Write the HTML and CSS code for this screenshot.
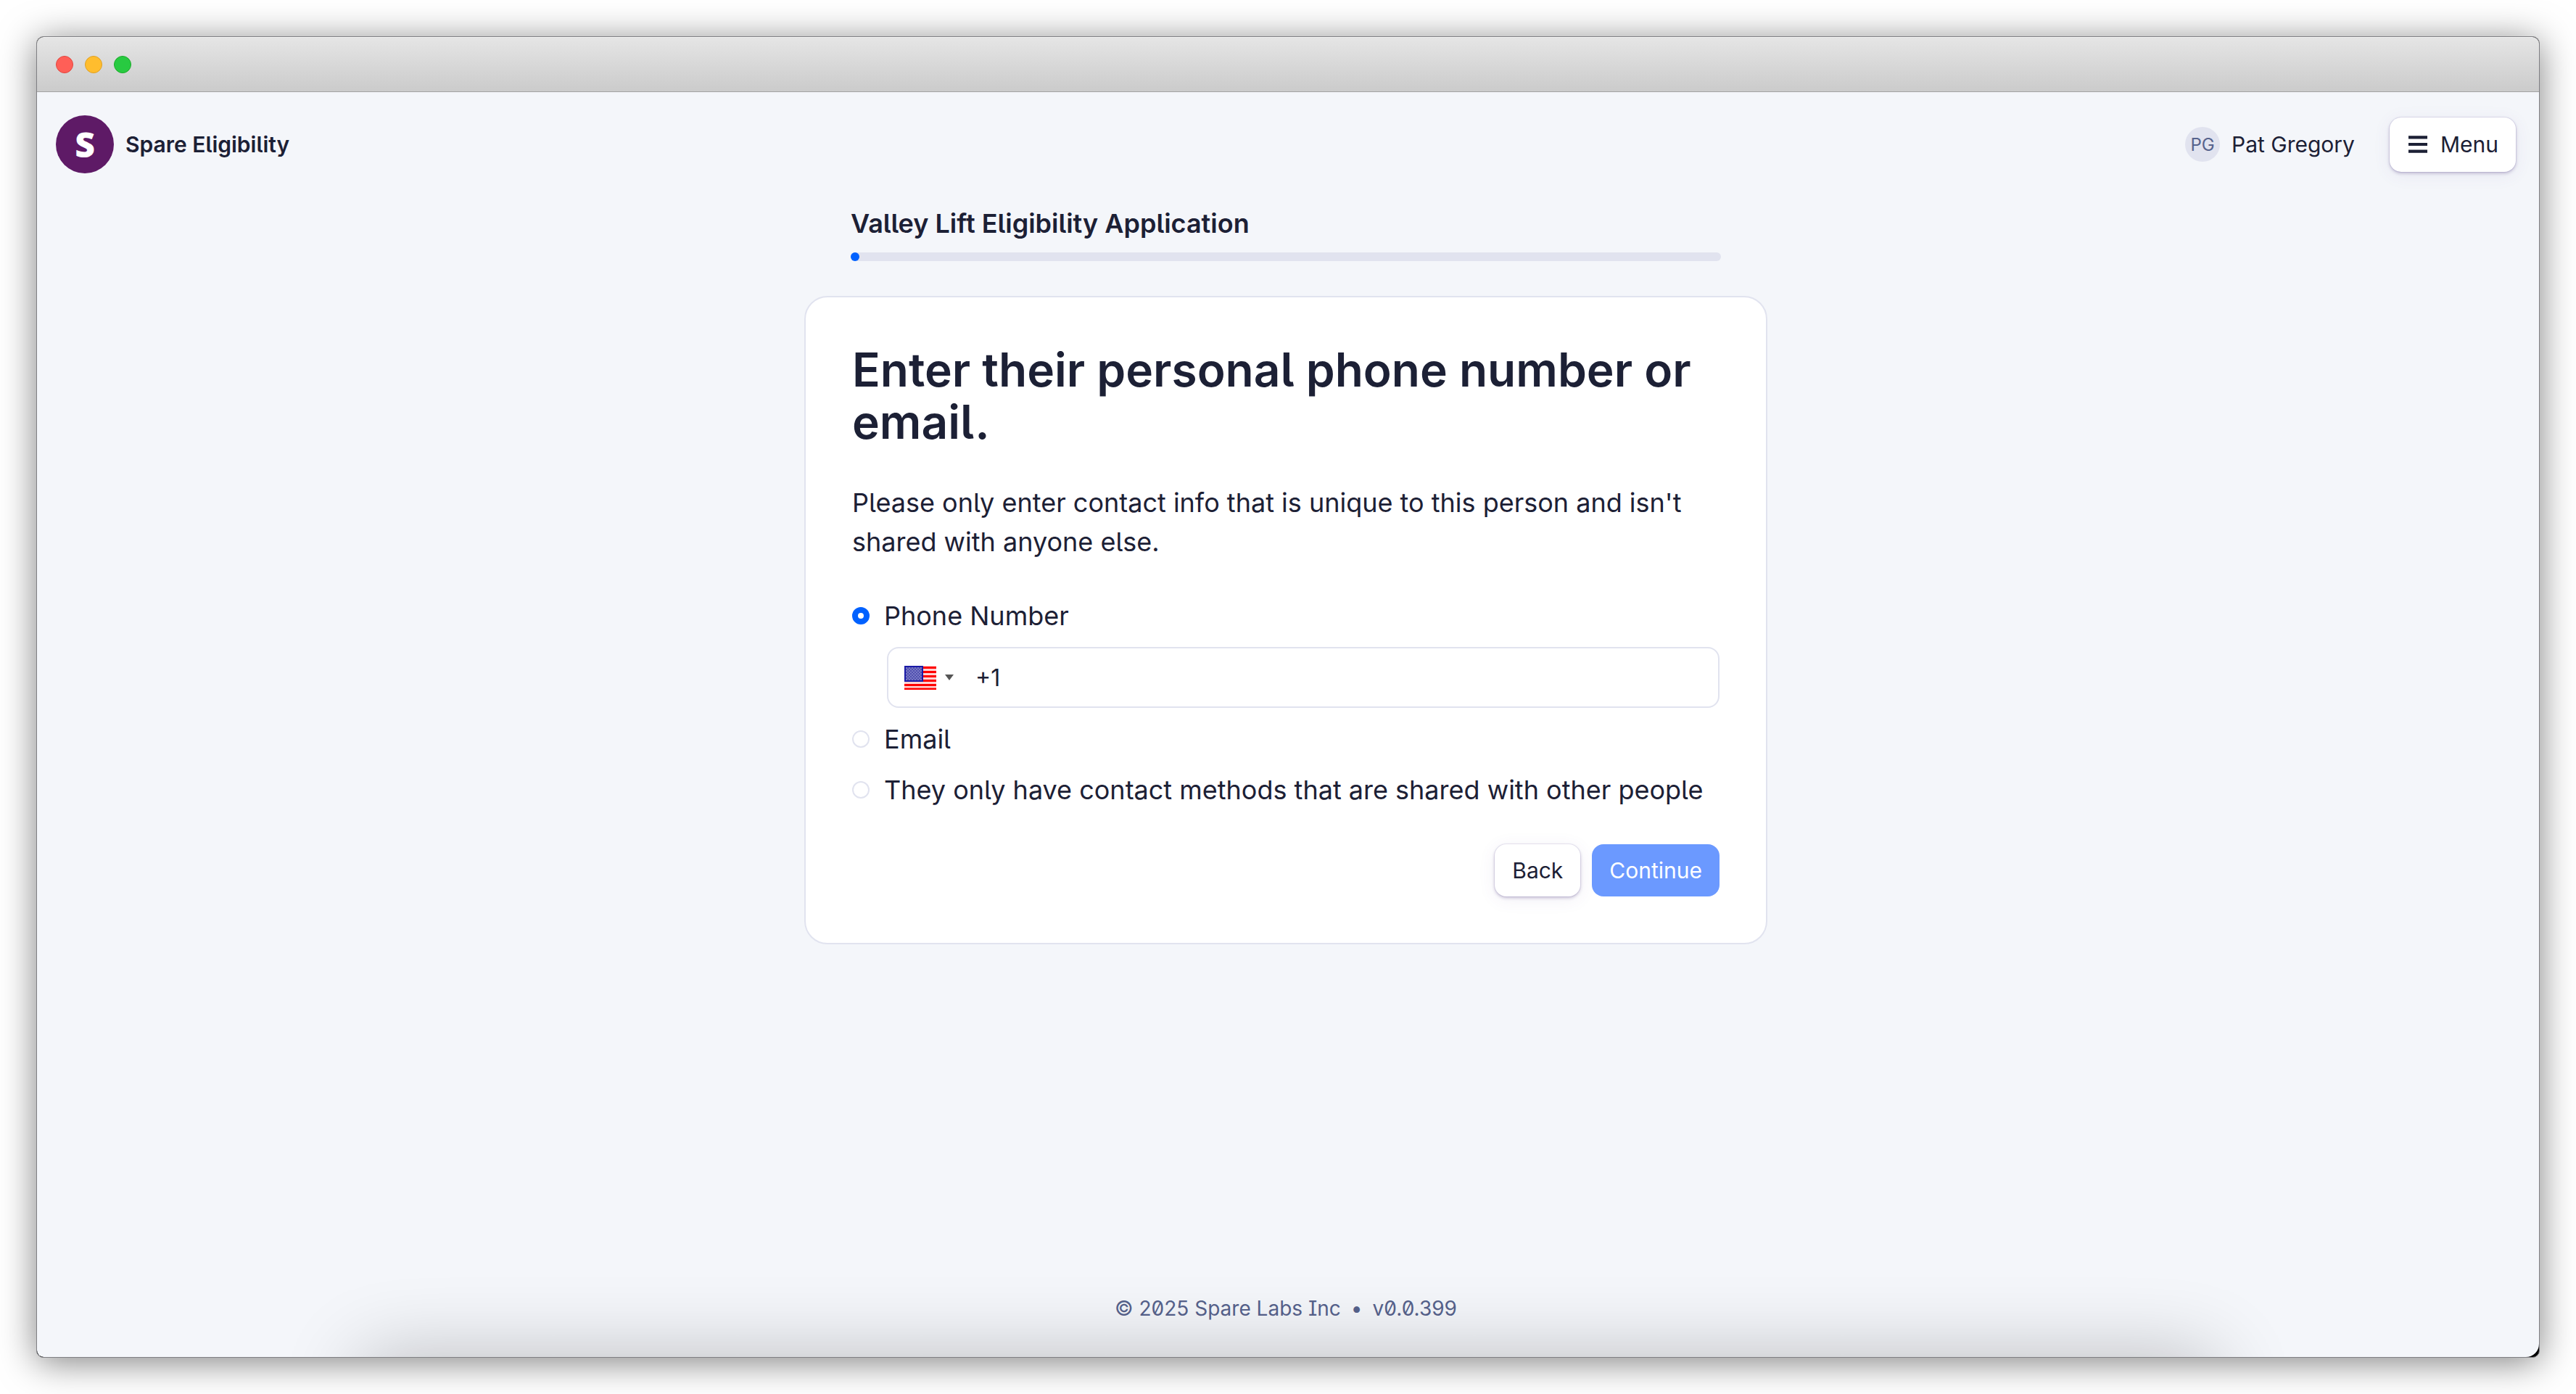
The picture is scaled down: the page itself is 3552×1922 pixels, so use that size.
FILE: index.html
```html
<!DOCTYPE html>
<html lang="en">
<head>
<meta charset="utf-8">
<meta name="viewport" content="width=device-width, initial-scale=1">
<title>Spare Eligibility</title>
<link rel="stylesheet" href="styles.css">
</head>
<body>
<div class="window">
  <div class="titlebar">
    <span class="light light-close"></span>
    <span class="light light-minimize"></span>
    <span class="light light-zoom"></span>
  </div>
  <div class="app">
    <header class="header">
      <a class="brand" href="#"><span class="logo">S</span><span>Spare Eligibility</span></a>
      <div class="account">
        <div class="user"><span class="avatar">PG</span><span>Pat Gregory</span></div>
        <button class="button button-menu" type="button">
          <svg class="menu-icon" viewBox="0 0 26 24" aria-hidden="true"><path d="M0 2.3h26M0 12h26M0 21.7h26" stroke="currentColor" stroke-width="4.2"/></svg>
          Menu
        </button>
      </div>
    </header>

    <main class="main">
      <div class="progress-block">
        <h2 class="form-name" id="form-name">Valley Lift Eligibility Application</h2>
        <div class="progress" role="progressbar" aria-labelledby="form-name" aria-valuenow="1" aria-valuemin="0" aria-valuemax="100"><div class="progress-fill" style="width: 1%"></div></div>
      </div>

      <form class="card">
        <h1 class="question">Enter their personal phone number or email.</h1>
        <p class="hint">Please only enter contact info that is unique to this person and isn't shared with anyone else.</p>
        <div class="options">
          <label class="option"><input class="radio" type="radio" name="contact" checked>Phone Number</label>
          <div class="phone-field">
            <button class="country" type="button" aria-label="Country: United States">
              <svg class="flag" viewBox="0 0 44 33" aria-hidden="true">
                <defs>
                  <pattern id="stars" width="4" height="4" patternUnits="userSpaceOnUse">
                    <rect width="4" height="4" fill="#5050b0"/>
                    <rect width="2" height="2" fill="#7878c4"/><rect x="2" y="2" width="2" height="2" fill="#7878c4"/>
                  </pattern>
                </defs>
                <rect width="44" height="33" fill="#ffd2d2"/>
                <path d="M0 2.5h44M0 8.5h44M0 14.5h44M0 20.5h44M0 26.5h44M0 32h44" stroke="#ff0000" stroke-width="3"/>
                <rect width="26" height="22" fill="#1a1aa6"/>
                <rect x="2" y="2" width="22" height="18" fill="url(#stars)"/>
              </svg>
              <svg class="caret" viewBox="0 0 12 8" aria-hidden="true"><path d="M0 0h12L6 8z" fill="#555"/></svg>
            </button>
            <input class="phone-input" type="tel" aria-label="Phone Number" value="+1">
          </div>
          <label class="option"><input class="radio" type="radio" name="contact">Email</label>
          <label class="option"><input class="radio" type="radio" name="contact">They only have contact methods that are shared with other people</label>
        </div>
        <div class="actions">
          <button class="button" type="button">Back</button>
          <button class="button button-primary" type="submit">Continue</button>
        </div>
      </form>
    </main>

    <footer class="footer"><span>© 2025 Spare Labs Inc</span><span>•</span><span>v0.0.399</span></footer>
  </div>
</div>
</body>
</html>
```
FILE: styles.css
```css
:root {
  --ink: #1c2035;
  --muted: #56628c;
  --line: #e1e3ef;
  --surface: #f4f6fa;
  --blue: #0061ff;
}

* {
  box-sizing: border-box;
}

body {
  margin: 0;
  min-height: 100vh;
  padding: 50px;
  display: flex;
  background: #fff;
  color: var(--ink);
  font-family: Inter, "Liberation Sans", sans-serif;
  font-size: 30px;
  font-feature-settings: "ss02";
}

h1, h2, p {
  margin: 0;
}

button, input {
  margin: 0;
  color: inherit;
  font: inherit;
}

.window {
  flex: 1;
  min-width: 0;
  display: flex;
  flex-direction: column;
  border: 1px solid #7f7f83;
  border-radius: 10px;
  background: #000;
  overflow: hidden;
  box-shadow: 0 6px 50px rgba(0, 0, 0, 0.5);
}

.titlebar {
  display: flex;
  align-items: center;
  gap: 16px;
  height: 76px;
  padding: 0 26px;
  border-top: 1px solid #f2f2f2;
  border-bottom: 1px solid #a3a3a3;
  background: linear-gradient(#e5e5e5, #cbcbcb);
}

.light {
  width: 24px;
  height: 24px;
  border: 1px solid;
  border-radius: 50%;
}

.light-close {
  background: #ff5f57;
  border-color: #e2463f;
}

.light-minimize {
  background: #ffbd2e;
  border-color: #dfa023;
}

.light-zoom {
  background: #28ca41;
  border-color: #1aab29;
}

.app {
  position: relative;
  flex: 1;
  display: flex;
  flex-direction: column;
  padding: 32px 32px 46px 26px;
  border-radius: 0 0 18px 9px;
  background: var(--surface);
  overflow: hidden;
}

/* Soft shade cast up from the bottom edge of the window */
.app::after {
  content: "";
  position: absolute;
  top: 100%;
  left: 13%;
  right: 13%;
  height: 200px;
  box-shadow: 0 0 110px rgba(0, 0, 0, 0.24);
  pointer-events: none;
}

.header,
.brand,
.account,
.user {
  display: flex;
  align-items: center;
}

.header {
  justify-content: space-between;
}

.brand {
  gap: 16px;
  color: inherit;
  font-weight: 600;
  text-decoration: none;
}

.logo {
  display: grid;
  place-items: center;
  width: 80px;
  height: 80px;
  border-radius: 50%;
  background: #5e1a66;
  color: #fff;
  font-family: "Open Sans", sans-serif;
  font-size: 48px;
  font-weight: 800;
  line-height: 80px;
}

.account {
  gap: 48px;
}

.user {
  gap: 16px;
}

.avatar {
  display: grid;
  place-items: center;
  width: 48px;
  height: 48px;
  border-radius: 50%;
  background: var(--line);
  color: var(--muted);
  font-size: 24px;
}

.button {
  display: flex;
  align-items: center;
  justify-content: center;
  height: 72px;
  padding: 0 24px;
  border: 0;
  border-radius: 16px;
  background: #fff;
  box-shadow: 0 0 0 1px rgba(90, 70, 150, 0.1), 0 2px 4px rgba(60, 40, 110, 0.28), 0 4px 24px rgba(90, 70, 150, 0.08);
}

.button-menu {
  gap: 18px;
  height: 75px;
  padding-left: 26px;
}

.menu-icon {
  width: 26px;
  height: 24px;
}

.button-primary {
  background: #6b99ff;
  box-shadow: none;
  color: #fff;
}

.main {
  width: 100%;
  max-width: 1328px;
  margin: 0 auto;
  padding: 41px 0 48px;
  display: flex;
  flex-direction: column;
  gap: 48px;
}

.progress-block {
  display: flex;
  flex-direction: column;
  gap: 12px;
  padding: 0 64px;
}

.form-name {
  font-size: 36px;
  font-weight: 600;
  line-height: 56px;
}

.progress {
  height: 12px;
  border-radius: 6px;
  background: var(--line);
}

.progress-fill {
  height: 100%;
  border-radius: 6px;
  background: var(--blue);
}

.card {
  display: flex;
  flex-direction: column;
  gap: 48px;
  padding: 64px;
  border: 2px solid var(--line);
  border-radius: 32px;
  background: #fff;
}

.question {
  font-size: 64px;
  font-weight: 600;
  line-height: 72px;
}

.hint,
.option {
  font-size: 36px;
  line-height: 54px;
}

.options {
  display: flex;
  flex-direction: column;
  gap: 16px;
}

.option {
  display: flex;
  align-items: center;
  gap: 20px;
}

.radio {
  appearance: none;
  width: 24px;
  height: 24px;
  border: 2px solid var(--line);
  border-radius: 50%;
  background: #fff;
}

.radio:checked {
  border: 8px solid var(--blue);
}

.phone-field {
  display: flex;
  height: 84px;
  margin-left: 48px;
  border: 2px solid var(--line);
  border-radius: 16px;
  background: #fff;
}

.country {
  display: flex;
  align-items: center;
  gap: 12px;
  padding: 0 22px;
  border: 0;
  background: none;
}

.flag {
  width: 44px;
  height: 33px;
}

.caret {
  width: 12px;
  height: 8px;
}

.phone-input {
  flex: 1;
  min-width: 0;
  padding: 0 8px;
  border: 0;
  background: none;
  font-size: 32px;
  outline: 0;
}

.actions {
  display: flex;
  justify-content: flex-end;
  gap: 16px;
}

.footer {
  display: flex;
  justify-content: center;
  gap: 14px;
  margin-top: auto;
  color: var(--muted);
  font-size: 28px;
  line-height: 42px;
}
```
